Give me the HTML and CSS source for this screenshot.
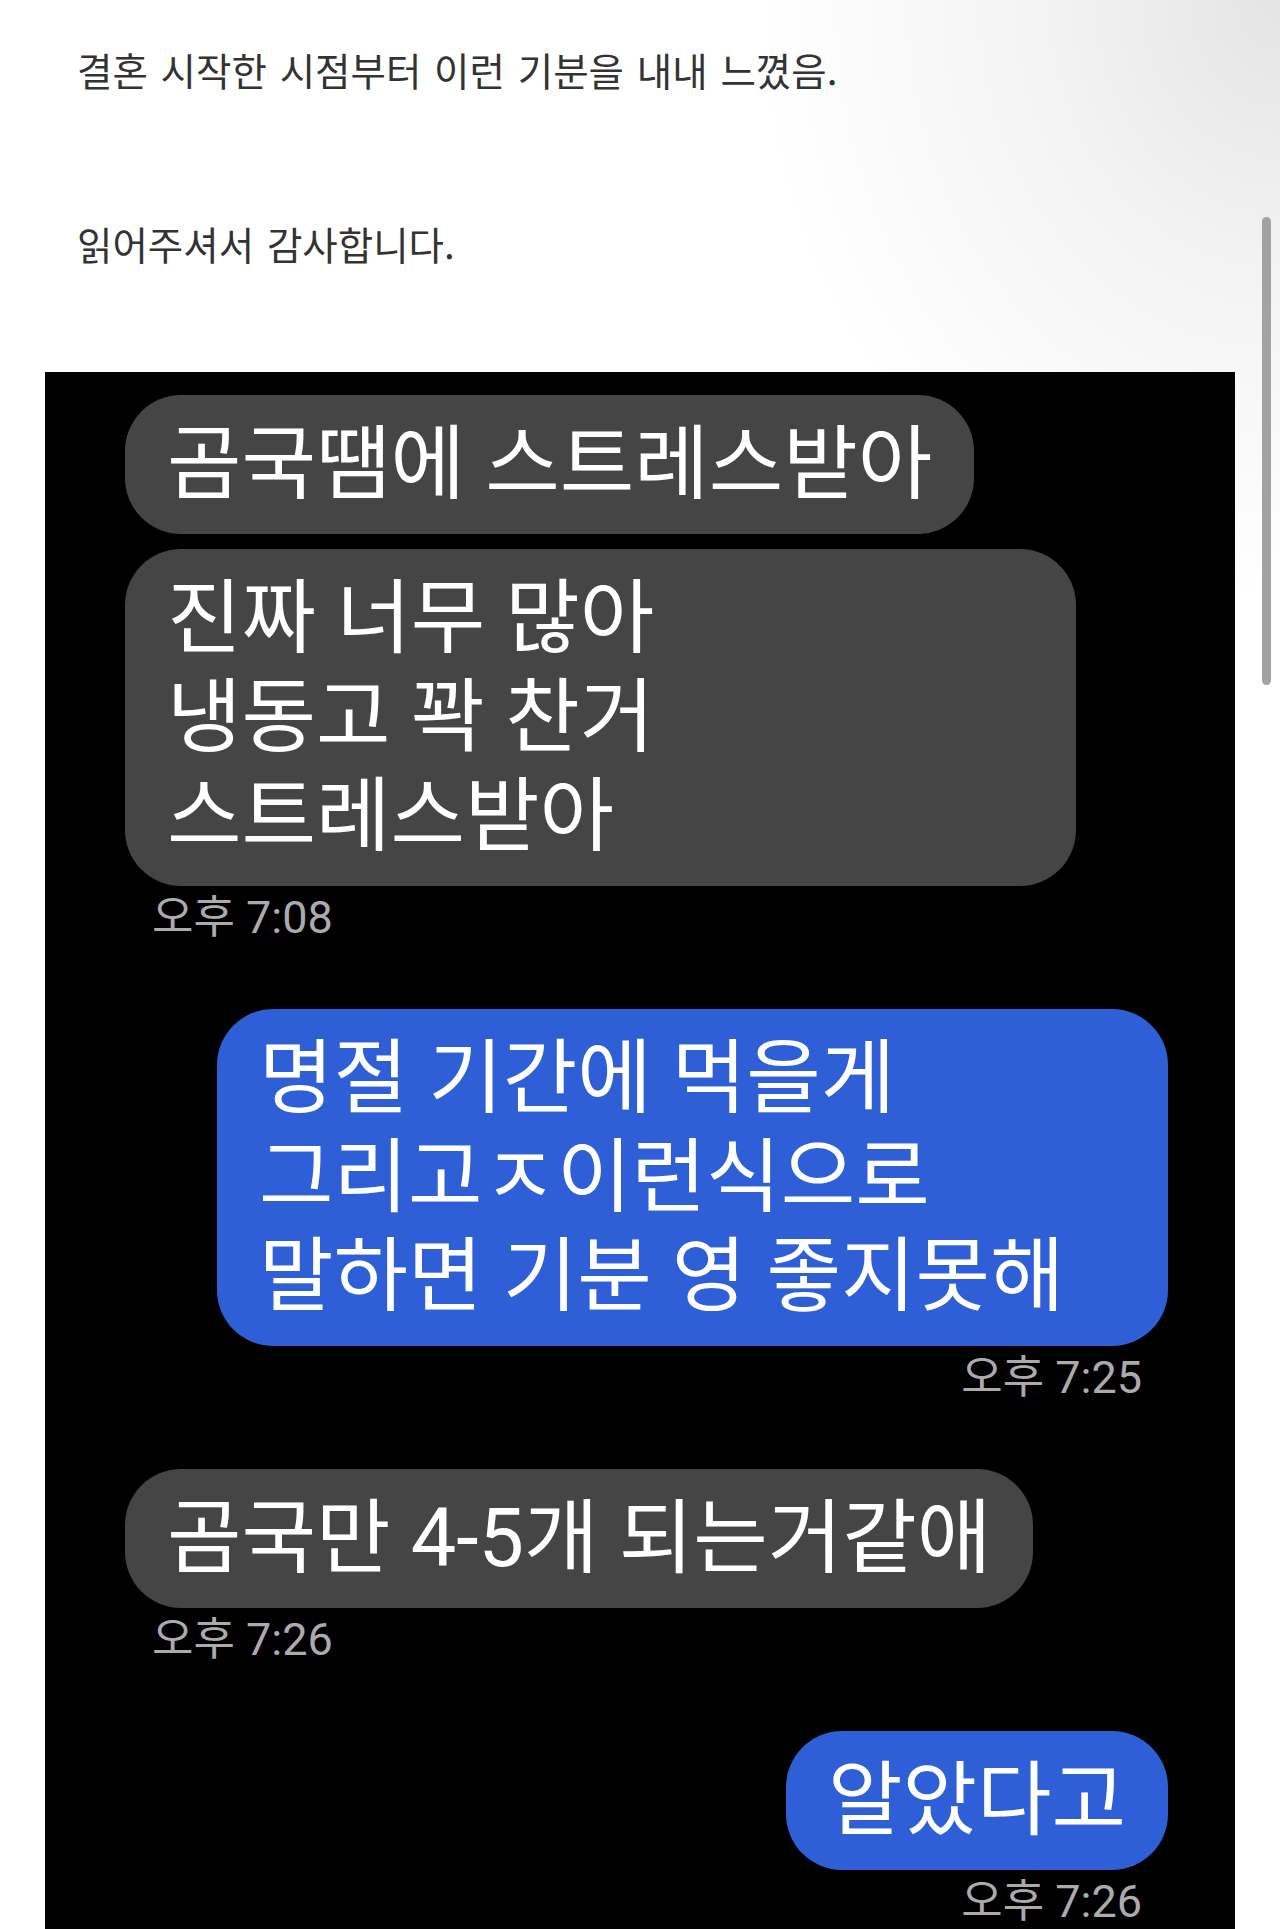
FILE: index.html
```html
<!DOCTYPE html>
<html lang="ko">
  <head>
    <meta charset="UTF-8" />
    <meta name="viewport" content="width=device-width, initial-scale=1.0" />
    <title>읽어주셔서 감사합니다</title>
    <link rel="stylesheet" href="styles.css">
  </head>
  <body>
    <div class="post">
      <p>결혼 시작한 시점부터 이런 기분을 내내 느꼈음.</p>
      <p>읽어주셔서 감사합니다.</p>
    </div>

    <div class="capture">
      <div class="group in">
        <div class="bubble">곰국땜에 스트레스받아</div>
        <div class="bubble full">진짜 너무 많아<br />냉동고 꽉 찬거<br />스트레스받아</div>
        <div class="time">오후 7:08</div>
      </div>

      <div class="group out">
        <div class="bubble full">명절 기간에 먹을게<br />그리고ㅈ이런식으로<br />말하면 기분 영 좋지못해</div>
        <div class="time">오후 7:25</div>
      </div>

      <div class="group in">
        <div class="bubble">곰국만 4-5개 되는거같애</div>
        <div class="time">오후 7:26</div>
      </div>

      <div class="group out">
        <div class="bubble">알았다고</div>
        <div class="time">오후 7:26</div>
      </div>
    </div>

    <div class="scrollbar"></div>
  </body>
</html>
```

FILE: styles.css
```css
html,
body {
  height: 1929px;
  overflow: hidden;
}
body {
  margin: 0;
  padding: 0;
  font-family: "Noto Sans CJK KR", "Noto Sans", sans-serif;
  color: #333333;
  background-color: #ffffff;
  background-image: radial-gradient(
    ellipse 520px 600px at 100% 0,
    #e4e4e4 0%,
    #f3f3f3 45%,
    rgba(255, 255, 255, 0) 100%
  );
  background-repeat: no-repeat;
}
.post {
  padding: 41px 0 0 77px;
}
.post p {
  margin: 0;
  font-size: 38.5px;
  line-height: 56px;
  word-spacing: 2px;
}
.post p + p {
  margin-top: 118px;
}
.capture {
  margin: 101px 45px 0 45px;
  padding: 23px 67px 40px 80px;
  background: #000000;
  display: flex;
  flex-direction: column;
  font-family: Roboto, "Noto Sans CJK KR", sans-serif;
}
.group {
  display: flex;
  flex-direction: column;
}
.group.in {
  align-items: flex-start;
}
.group.out {
  align-items: flex-end;
}
.bubble {
  padding: 20px 42px;
  border-radius: 56px;
  background: #454545;
  color: #ffffff;
  font-size: 81px;
  line-height: 99px;
  white-space: nowrap;
  box-sizing: border-box;
}
.out .bubble {
  background: #2f5fd6;
}
.bubble + .bubble {
  margin-top: 15px;
}
.bubble.full {
  width: 951px;
}
.time {
  margin: 8px 27px 67px;
  color: #ababab;
  font-size: 45px;
  line-height: 48px;
}
.out .time {
  margin-right: 26px;
}
.scrollbar {
  position: fixed;
  top: 217px;
  right: 9px;
  width: 9px;
  height: 468px;
  border-radius: 5px;
  background: #a2a2a2;
}
```
